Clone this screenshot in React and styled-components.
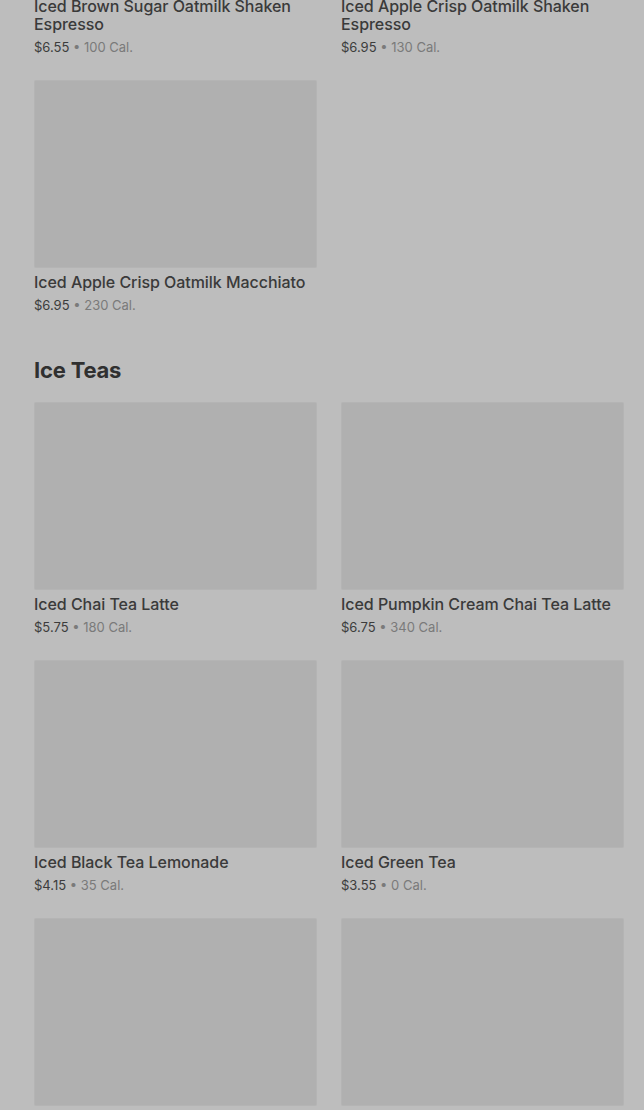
import React from 'react';
import styled, { createGlobalStyle } from 'styled-components';

const GlobalStyle = createGlobalStyle`
  html, body {
    margin: 0;
    padding: 0;
    background: #bdbdbd;
    overflow: hidden;
  }
  body {
    font-family: Inter, "Open Sans", sans-serif;
    color: #3a3a3a;
  }
`;

const Page = styled.main`
  height: 1110px;
  overflow: hidden;
  background: #bdbdbd;
`;

const Scroller = styled.div`
  margin-top: -196px;
  padding: 0 20px 0 34px;
`;

const Section = styled.section`
  & + & {
    margin-top: 42px;
  }
`;

const Heading = styled.h2`
  margin: 0 0 18px;
  font-size: 22px;
  line-height: 28px;
  font-weight: 700;
  letter-spacing: -0.2px;
  color: #303030;
`;

const Grid = styled.div`
  display: grid;
  grid-template-columns: 1fr 1fr;
  column-gap: 24px;
  row-gap: 24px;
`;

const Card = styled.article`
  display: flex;
  flex-direction: column;
`;

const Thumb = styled.div`
  height: 188px;
  border-radius: 2px;
  background: #b0b0b0;
  box-shadow: inset 0 0 0 1px rgba(255, 255, 255, 0.06);
  margin-bottom: 5px;
`;

const Title = styled.h3`
  margin: 0;
  font-size: 16px;
  line-height: 18px;
  font-weight: 500;
  letter-spacing: -0.05px;
  color: #3a3a3a;
`;

const Meta = styled.div`
  margin-top: 5px;
  font-size: 13px;
  line-height: 18px;
  color: #3c3c3c;
`;

const Cal = styled.span`
  color: #7a7a7a;
`;

const sections = [
  {
    name: null,
    items: [
      { title: 'Iced Brown Sugar Oatmilk Shaken Espresso', price: '$6.55', cal: 100 },
      { title: 'Iced Apple Crisp Oatmilk Shaken Espresso', price: '$6.95', cal: 130 },
      { title: 'Iced Apple Crisp Oatmilk Macchiato', price: '$6.95', cal: 230 },
    ],
  },
  {
    name: 'Ice Teas',
    items: [
      { title: 'Iced Chai Tea Latte', price: '$5.75', cal: 180 },
      { title: 'Iced Pumpkin Cream Chai Tea Latte', price: '$6.75', cal: 340 },
      { title: 'Iced Black Tea Lemonade', price: '$4.15', cal: 35 },
      { title: 'Iced Green Tea', price: '$3.55', cal: 0 },
      { title: 'Iced Passion Tango Tea', price: '$3.55', cal: 0 },
      { title: 'Iced Peach Green Tea', price: '$4.15', cal: 60 },
    ],
  },
];

const MenuCard = ({ title, price, cal }) => (
  <Card>
    <Thumb />
    <Title>{title}</Title>
    <Meta>
      {price} <Cal>• {cal} Cal.</Cal>
    </Meta>
  </Card>
);

export default function App() {
  return (
    <Page>
      <GlobalStyle />
      <Scroller>
        {sections.map((section, i) => (
          <Section key={section.name || `section-${i}`}>
            {section.name && <Heading>{section.name}</Heading>}
            <Grid>
              {section.items.map(item => (
                <MenuCard key={item.title} {...item} />
              ))}
            </Grid>
          </Section>
        ))}
      </Scroller>
    </Page>
  );
}
